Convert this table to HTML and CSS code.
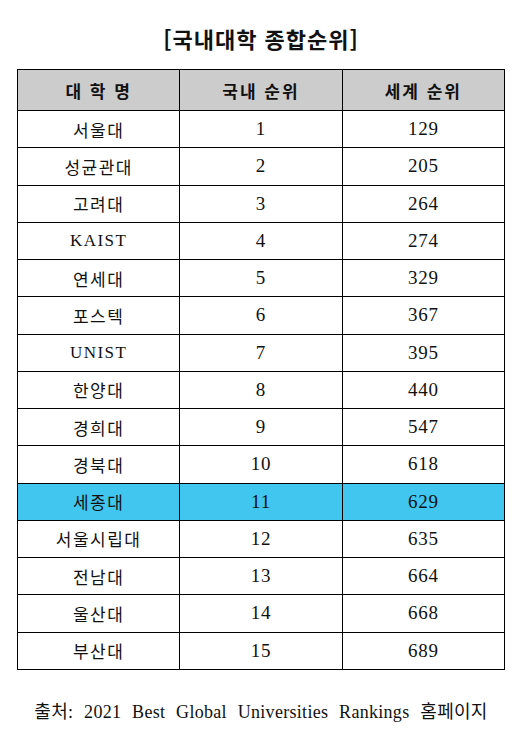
FILE: index.html
```html
<!DOCTYPE html>
<html lang="ko">
<head>
<meta charset="utf-8">
<link rel="stylesheet" href="styles.css">
</head>
<body>
<div class="page">
  <h1 class="title">[국내대학 종합순위]</h1>
  <table class="rank">
    <thead>
      <tr><th>대 학 명</th><th>국내 순위</th><th>세계 순위</th></tr>
    </thead>
    <tbody>
      <tr><td class="name">서울대</td><td>1</td><td>129</td></tr>
      <tr><td class="name">성균관대</td><td>2</td><td>205</td></tr>
      <tr><td class="name">고려대</td><td>3</td><td>264</td></tr>
      <tr><td class="name">KAIST</td><td>4</td><td>274</td></tr>
      <tr><td class="name">연세대</td><td>5</td><td>329</td></tr>
      <tr><td class="name">포스텍</td><td>6</td><td>367</td></tr>
      <tr><td class="name">UNIST</td><td>7</td><td>395</td></tr>
      <tr><td class="name">한양대</td><td>8</td><td>440</td></tr>
      <tr><td class="name">경희대</td><td>9</td><td>547</td></tr>
      <tr><td class="name">경북대</td><td>10</td><td>618</td></tr>
      <tr class="hl"><td class="name">세종대</td><td>11</td><td>629</td></tr>
      <tr><td class="name">서울시립대</td><td>12</td><td>635</td></tr>
      <tr><td class="name">전남대</td><td>13</td><td>664</td></tr>
      <tr><td class="name">울산대</td><td>14</td><td>668</td></tr>
      <tr><td class="name">부산대</td><td>15</td><td>689</td></tr>
    </tbody>
  </table>
  <p class="source">출처: 2021 Best Global Universities Rankings 홈페이지</p>
</div>
</body>
</html>
```
FILE: styles.css
```css
html, body {
  margin: 0;
  padding: 0;
  background: #ffffff;
}
.page {
  width: 522px;
  padding-top: 20px;
  font-family: "Liberation Serif", "Noto Sans CJK KR", serif;
  color: #111;
}
.title {
  margin: 0 0 13px 0;
  text-align: center;
  font-family: "Noto Sans CJK KR", sans-serif;
  font-size: 22px;
  font-weight: 700;
  line-height: 36px;
  letter-spacing: 1px;
}
.rank {
  margin-left: 17px;
  width: 488px;
  border-collapse: collapse;
  table-layout: fixed;
}
.rank th, .rank td {
  border: 1.5px solid #000;
  text-align: center;
  padding: 0;
}
.rank th {
  background: #cccccc;
  height: 40px;
  font-family: "Noto Sans CJK KR", sans-serif;
  font-size: 17px;
  font-weight: 700;
  letter-spacing: 2px;
}
.rank td {
  height: 36.25px;
  font-size: 19px;
  letter-spacing: 0.8px;
  font-weight: 400;
}
.rank td.name {
  font-size: 17px;
  letter-spacing: 1.5px;
}
.rank tr.hl td {
  background: #41c6ef;
}
.source {
  margin: 30px 0 0 0;
  text-align: center;
  font-size: 18px;
  line-height: 24px;
  word-spacing: 6px;
  letter-spacing: 0.3px;
}
```
